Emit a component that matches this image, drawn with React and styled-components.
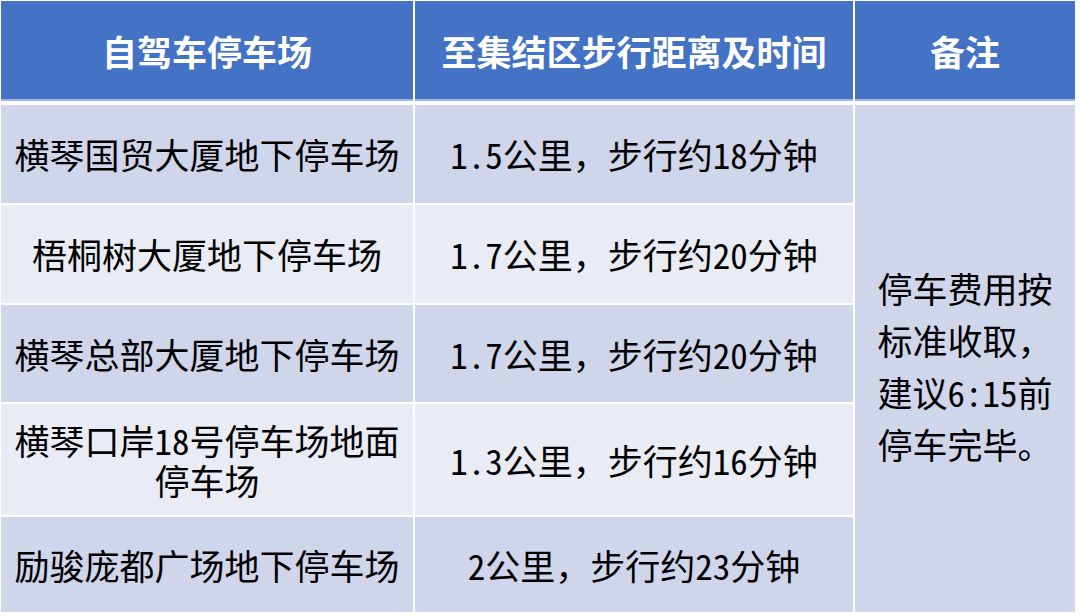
import React from 'react';
import styled, { createGlobalStyle } from 'styled-components';

const GlobalStyle = createGlobalStyle`
  html, body {
    margin: 0;
    padding: 0;
    background: #fff;
  }
  body {
    font-family: "Noto Sans CJK SC", "Noto Sans", sans-serif;
  }
`;

const Page = styled.div`
  width: 1080px;
  height: 616px;
  box-sizing: border-box;
  padding: 1px;
`;

const Grid = styled.div`
  display: grid;
  grid-template-columns: 412px 438px 220px;
  column-gap: 2px;
`;

const HeadRow = styled(Grid)`
  height: 100px;
  margin-bottom: 4px;
`;

const HeadCell = styled.div`
  background: #4472c4;
  box-shadow: inset 0 -2px 0 #9fb5e2;
  color: #fff;
  font-weight: 700;
  font-size: 35px;
  display: flex;
  align-items: center;
  justify-content: center;
  padding-bottom: 2px;
`;

const Body = styled(Grid)`
  grid-template-rows: ${(p) => p.$rows};
  row-gap: 2px;
`;

const Cell = styled.div`
  grid-column: ${(p) => p.$col};
  grid-row: ${(p) => p.$row};
  background: ${(p) => (p.$alt ? '#e9ebf5' : '#cfd5ea')};
  color: #000;
  font-size: 35px;
  line-height: 40px;
  display: flex;
  align-items: center;
  justify-content: center;
  text-align: center;
`;

const NoteCell = styled(Cell)`
  line-height: 52px;
  text-align: left;
  padding-top: 14px;
`;

const Num = styled.span`
  font-feature-settings: "hwid" 1;
`;

const rows = [
  { name: ['横琴国贸大厦地下停车场'], dist: '1.5', time: '18', h: 98 },
  { name: ['梧桐树大厦地下停车场'], dist: '1.7', time: '20', h: 98 },
  { name: ['横琴总部大厦地下停车场'], dist: '1.7', time: '20', h: 97 },
  { name: [<>横琴口岸<Num>18</Num>号停车场地面</>, '停车场'], dist: '1.3', time: '16', h: 111 },
  { name: ['励骏庞都广场地下停车场'], dist: '2', time: '23', h: 95 },
];

const App = () => {
  return (
    <Page>
      <GlobalStyle />
      <HeadRow>
        <HeadCell>自驾车停车场</HeadCell>
        <HeadCell>至集结区步行距离及时间</HeadCell>
        <HeadCell>备注</HeadCell>
      </HeadRow>
      <Body $rows={rows.map((r) => r.h + 'px').join(' ')}>
        {rows.map((r, i) => (
          <React.Fragment key={i}>
            <Cell $col={1} $row={i + 1} $alt={i % 2 === 1}>
              <div>
                {r.name.map((line, j) => (
                  <div key={j}>{line}</div>
                ))}
              </div>
            </Cell>
            <Cell $col={2} $row={i + 1} $alt={i % 2 === 1}>
              <div>
                <Num>{r.dist}</Num>公里，步行约<Num>{r.time}</Num>分钟
              </div>
            </Cell>
          </React.Fragment>
        ))}
        <NoteCell $col={3} $row="1 / -1">
          <div>
            停车费用按<br />
            标准收取，<br />
            建议<Num>6:15</Num>前<br />
            停车完毕。
          </div>
        </NoteCell>
      </Body>
    </Page>
  );
};

export default App;
